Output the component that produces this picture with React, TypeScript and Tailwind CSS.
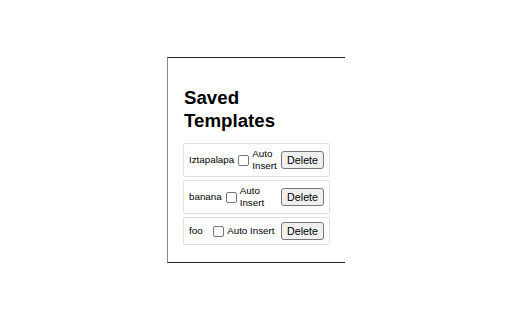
import React from 'react';

const templates = ['Iztapalapa', 'banana', 'foo'];

export default function App() {
  return (
    <div className="w-[512px] h-[320px] bg-white pt-[57px] pl-[167px] font-['Liberation_Sans',Arial,sans-serif] text-black">
      <div className="w-[178px] h-[206px] border-t border-b border-l border-t-[#222] border-b-[#222] border-l-[#888] pl-[15px] pr-[15px] pt-[28px]">
        <h2 className="text-[18.7px] leading-[23px] font-bold ml-[1px]">Saved Templates</h2>

        <div className="mt-[11px] flex flex-col gap-[3px]">
          {templates.map((name) => (
            <div
              key={name}
              className="flex items-center justify-between border border-[#e0e0e0] rounded-[2px] px-[5px] py-[4px]"
            >
              <span className="text-[9.8px]">{name}</span>
              <label className="flex items-center text-[9.8px] leading-[12px]">
                <input
                  type="checkbox"
                  className="appearance-none shrink-0 w-[11px] h-[11px] border border-[#767676] rounded-[2px] bg-white ml-[4px] mr-[3px]"
                />
                <span>Auto Insert</span>
              </label>
              <button className="shrink-0 text-[10.7px] leading-[12px] px-[5px] py-[2px] border border-[#767676] rounded-[3px] bg-[#efefef]">
                Delete
              </button>
            </div>
          ))}
        </div>
      </div>
    </div>
  );
}
